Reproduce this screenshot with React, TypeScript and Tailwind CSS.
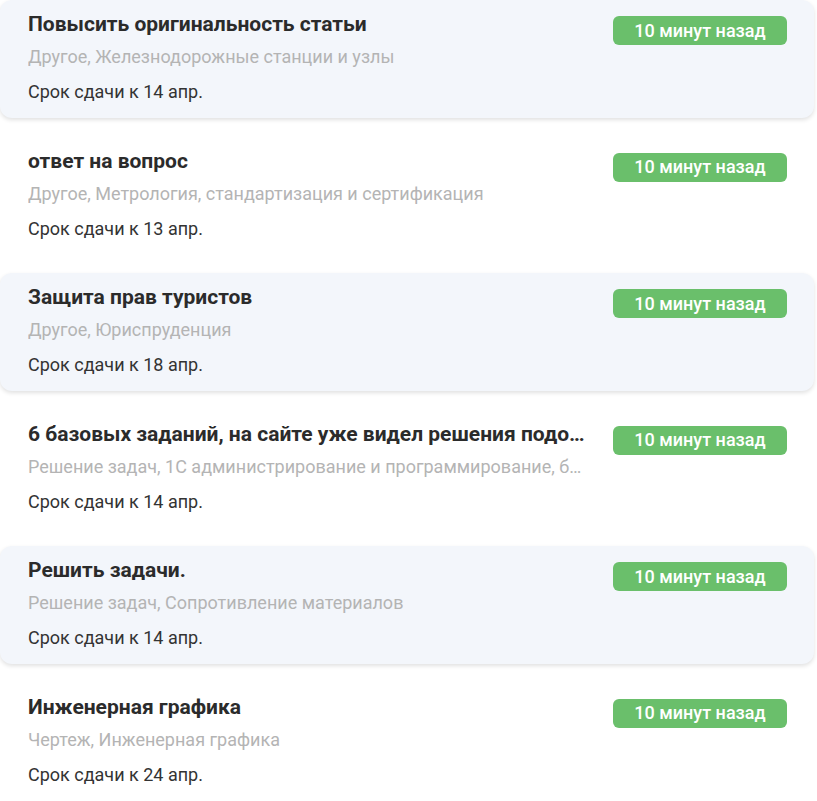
const tasks = [
  {
    title: "Повысить оригинальность статьи",
    subject: "Другое, Железнодорожные станции и узлы",
    deadline: "Срок сдачи к 14 апр.",
  },
  {
    title: "ответ на вопрос",
    subject: "Другое, Метрология, стандартизация и сертификация",
    deadline: "Срок сдачи к 13 апр.",
  },
  {
    title: "Защита прав туристов",
    subject: "Другое, Юриспруденция",
    deadline: "Срок сдачи к 18 апр.",
  },
  {
    title: "6 базовых заданий, на сайте уже видел решения подобных задач",
    subject: "Решение задач, 1С администрирование и программирование, базы данных",
    deadline: "Срок сдачи к 14 апр.",
  },
  {
    title: "Решить задачи.",
    subject: "Решение задач, Сопротивление материалов",
    deadline: "Срок сдачи к 14 апр.",
  },
  {
    title: "Инженерная графика",
    subject: "Чертеж, Инженерная графика",
    deadline: "Срок сдачи к 24 апр.",
  },
];

export default function App() {
  return (
    <main
      className="min-h-screen bg-white pr-[3px]"
      style={{ fontFamily: "Roboto, 'Noto Sans', sans-serif" }}
    >
      <div className="flex flex-col gap-[18.6px]">
        {tasks.map((task, i) => (
          <div
            key={i}
            className={
              i % 2 === 0
                ? "flex h-[118px] items-start rounded-[12px] bg-[#f3f6fb] pl-[28px] pr-[27px] pt-[12px] shadow-[0_2px_4px_rgba(0,0,0,0.12)]"
                : "flex h-[118px] items-start rounded-[12px] pl-[28px] pr-[27px] pt-[12px]"
            }
          >
            <div className="min-w-0 flex-1">
              <h3 className="truncate text-[21px] font-bold leading-[24px] text-[#2b2b2b]">
                {task.title}
              </h3>
              <p className="mt-[10px] truncate text-[18px] leading-[22px] text-[#b4b4b4]">
                {task.subject}
              </p>
              <p className="mt-[13px] text-[18px] leading-[22px] text-[#333333]">
                {task.deadline}
              </p>
            </div>
            <span className="ml-[28px] mt-[4px] flex h-[29px] w-[174px] shrink-0 items-center justify-center rounded-[6px] bg-[#6abf6b] text-[18px] font-medium leading-none text-white">
              10 минут назад
            </span>
          </div>
        ))}
      </div>
    </main>
  );
}
